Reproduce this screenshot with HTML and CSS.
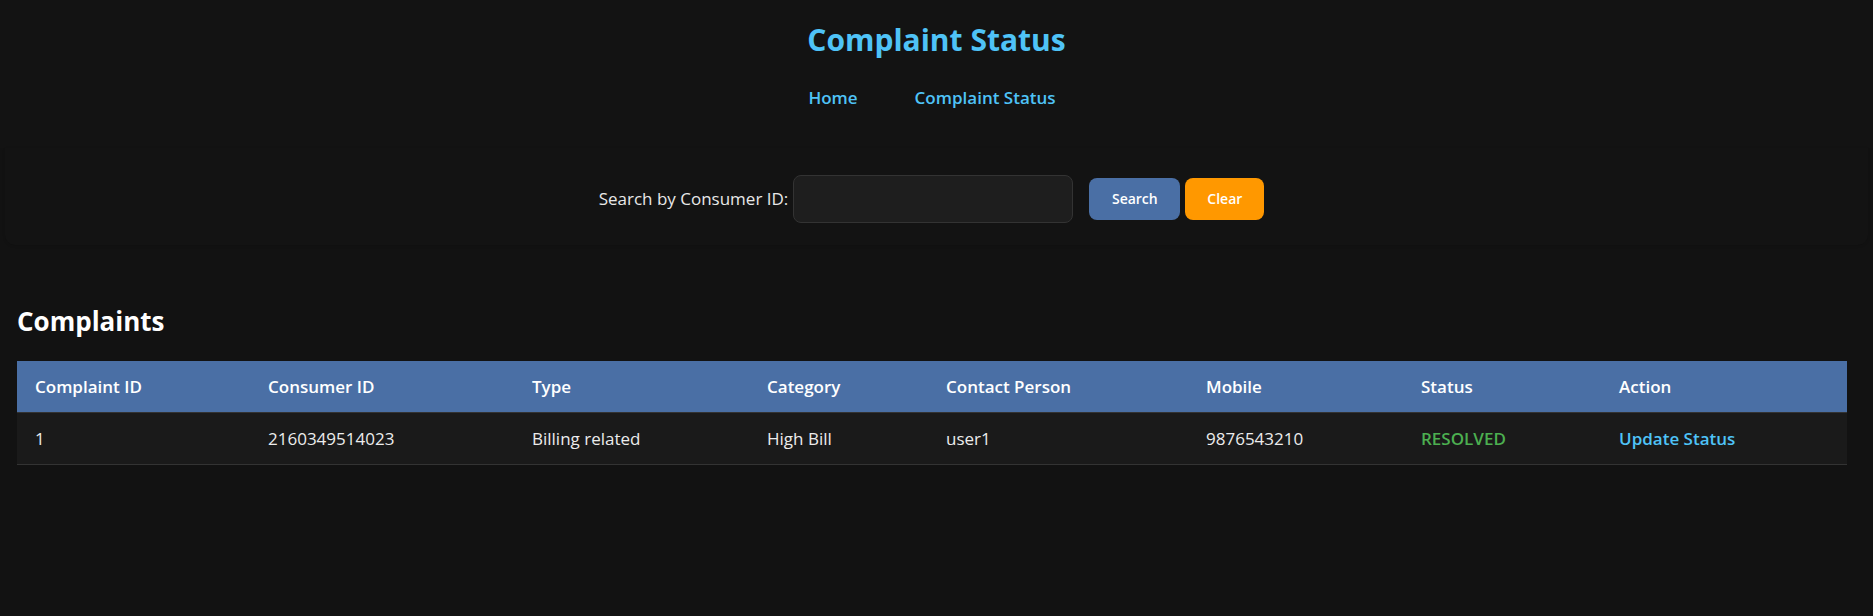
FILE: index.html
```html
<!DOCTYPE html>
<html lang="en">
<head>
<meta charset="utf-8">
<title>Complaint Status</title>
<link rel="stylesheet" href="styles.css">
</head>
<body>
<header class="top">
  <h1 class="title">Complaint Status</h1>
  <nav class="nav">
    <a href="#" class="nav-link">Home</a>
    <a href="#" class="nav-link">Complaint Status</a>
  </nav>
</header>

<section class="search-panel">
  <label class="search-label" for="cid">Search by Consumer ID:</label>
  <input class="search-input" id="cid" type="text">
  <button class="btn btn-search">Search</button>
  <button class="btn btn-clear">Clear</button>
</section>

<section class="list">
  <h2 class="list-title">Complaints</h2>
  <table class="grid">
    <colgroup>
      <col class="c1"><col class="c2"><col class="c3"><col class="c4">
      <col class="c5"><col class="c6"><col class="c7"><col class="c8">
    </colgroup>
    <thead>
      <tr>
        <th>Complaint ID</th>
        <th>Consumer ID</th>
        <th>Type</th>
        <th>Category</th>
        <th>Contact Person</th>
        <th>Mobile</th>
        <th>Status</th>
        <th>Action</th>
      </tr>
    </thead>
    <tbody>
      <tr>
        <td>1</td>
        <td>2160349514023</td>
        <td>Billing related</td>
        <td>High Bill</td>
        <td>user1</td>
        <td>9876543210</td>
        <td class="status-resolved">RESOLVED</td>
        <td><a href="#" class="action-link">Update Status</a></td>
      </tr>
    </tbody>
  </table>
</section>
</body>
</html>
```

FILE: styles.css
```css
* { box-sizing: border-box; }

html, body {
  margin: 0;
  padding: 0;
  background: #121212;
  color: #e0e0e0;
  font-family: "Open Sans", "Noto Sans", sans-serif;
}

.top {
  background: #131313;
  height: 148px;
  padding-top: 20px;
  display: flex;
  flex-direction: column;
  align-items: center;
}

.title {
  margin: 0;
  font-size: 30px;
  line-height: 40px;
  font-weight: 700;
  color: #4fc3f7;
}

.nav {
  margin-top: 26px;
  display: flex;
  gap: 57px;
  padding-right: 9px;
}

.nav-link {
  color: #4fc3f7;
  text-decoration: none;
  font-size: 17px;
  font-weight: 600;
  line-height: 24px;
}

.search-panel {
  height: 97px;
  margin: 0 5px;
  background: #131313;
  border-radius: 0 0 10px 10px;
  box-shadow: 0 1px 3px rgba(0, 0, 0, 0.12);
  display: flex;
  align-items: center;
  justify-content: center;
  padding-right: 10px;
  padding-top: 4px;
}

.search-label {
  font-size: 17px;
  color: #e8e8e8;
  margin-right: 5px;
}

.search-input {
  width: 280px;
  height: 48px;
  background: #1e1e1e;
  border: 1px solid #333;
  border-radius: 8px;
  margin-right: 16px;
  color: #e0e0e0;
  font-size: 16px;
  padding: 0 12px;
}

.btn {
  height: 42px;
  border: none;
  border-radius: 8px;
  color: #fff;
  font-family: inherit;
  font-size: 14px;
  font-weight: 600;
  padding: 0;
}

.btn-search {
  width: 91px;
  background: #4a6fa5;
  margin-right: 5px;
}

.btn-clear {
  width: 79px;
  background: #ff9800;
}

.list {
  margin-top: 20px;
  padding: 40px 26px 24px 17px;
  background: #121212;
}

.list-title {
  margin: 0 0 24px;
  font-size: 26px;
  line-height: 32px;
  font-weight: 700;
  color: #fff;
}

.grid {
  width: 1830px;
  border-collapse: collapse;
  table-layout: fixed;
}

.c1 { width: 233px; }
.c2 { width: 264px; }
.c3 { width: 235px; }
.c4 { width: 179px; }
.c5 { width: 260px; }
.c6 { width: 215px; }
.c7 { width: 198px; }
.c8 { width: 246px; }

.grid th,
.grid td {
  text-align: left;
  padding: 0 18px;
  border-bottom: 1px solid #333;
  font-size: 17px;
}

.grid th {
  height: 51px;
  background: #4a6fa5;
  color: #fff;
  font-weight: 600;
}

.grid td {
  height: 52px;
  background: #1a1a1a;
  color: #ececec;
}

.status-resolved {
  color: #4caf50 !important;
  font-weight: 600;
}

.action-link {
  color: #4fc3f7;
  text-decoration: none;
  font-weight: 600;
}
```
